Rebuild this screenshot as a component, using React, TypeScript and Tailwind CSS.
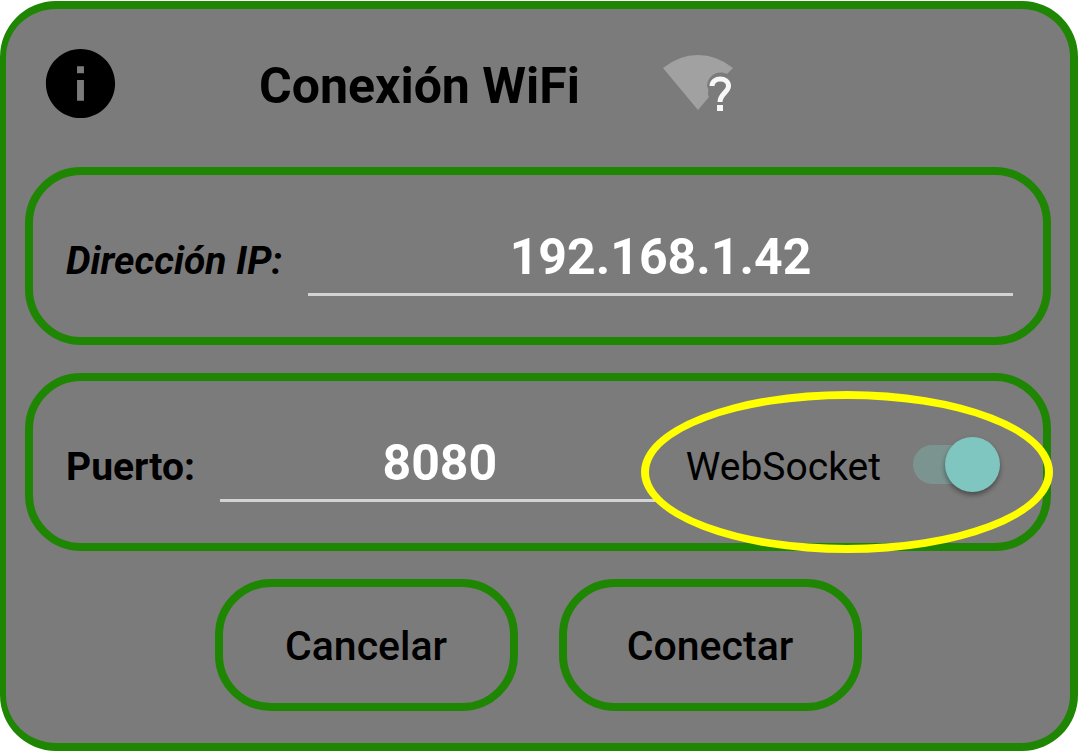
import { useState } from "react";
import { MdInfo } from "react-icons/md";

function WifiUnknownIcon() {
  return (
    <svg width="72" height="60" viewBox="0 0 72 60" fill="none" aria-hidden="true">
      <path
        d="M35 55 L0 13 Q16 0 35 0 Q54 0 70 13 L64 19 C56 15 45 19 44 31 C46 34 45 37 45 40 L46 42 Z"
        fill="#a1a1a1"
      />
      <path d="M49 31 C49 21.5 65.5 22 65.5 31 C65.5 37 57 39 57 47" stroke="#f7f7f7" strokeWidth="5" />
      <rect x="54" y="50" width="6" height="6" fill="#f7f7f7" />
    </svg>
  );
}

const panel =
  "relative flex items-baseline rounded-[56px] border-8 border-[#1f8604] py-[41px] pl-[33px] pr-[30px]";
const field =
  "h-20 min-w-0 flex-1 border-b-3 border-[#d3d3d3] bg-transparent pt-1 text-center text-[50px] font-bold text-white outline-none";
const action =
  "h-[132px] w-[303px] rounded-[56px] border-8 border-[#1f8604] pt-1 text-[41px] font-medium";

export default function App() {
  const [ip, setIp] = useState("192.168.1.42");
  const [port, setPort] = useState("8080");
  const [webSocket, setWebSocket] = useState(true);

  return (
    <main className="bg-white pt-px font-['Roboto',sans-serif] text-black">
      <form
        className="rounded-[56px] border-8 border-l-6 border-[#1f8604] bg-[#7b7b7b] pb-8 pl-[19px] pr-[19px]"
        onSubmit={(e) => e.preventDefault()}
      >
        <header className="flex h-[158px] items-start pl-[14px] pt-[33px]">
          <button type="button" aria-label="Información">
            <MdInfo size={83} />
          </button>
          <h1 className="ml-[137px] mt-3 text-[50px] leading-[64px] font-bold">Conexión WiFi</h1>
          <div className="ml-[83px] mt-[13px]">
            <WifiUnknownIcon />
          </div>
        </header>

        <div className="flex flex-col gap-7">
          <section className={panel}>
            <label htmlFor="ip" className="w-[242px] shrink-0 text-[39px] leading-[48px] font-bold italic">
              Dirección IP:
            </label>
            <input id="ip" className={field} value={ip} onChange={(e) => setIp(e.target.value)} />
          </section>

          <section className={panel}>
            <label htmlFor="port" className="w-[154px] shrink-0 text-[39px] leading-[48px] font-bold">
              Puerto:
            </label>
            <input id="port" className={field} value={port} onChange={(e) => setPort(e.target.value)} />
            <label className="flex shrink-0 items-center gap-8 pl-[26px] pr-[13px] text-[39px] leading-[48px]">
              WebSocket
              <input
                type="checkbox"
                role="switch"
                className="peer sr-only"
                checked={webSocket}
                onChange={(e) => setWebSocket(e.target.checked)}
              />
              <span className="mb-1 flex h-[39px] w-[87px] items-center justify-start rounded-full bg-[linear-gradient(#7b9490,#7b9490)] bg-size-[70px_39px] bg-no-repeat peer-checked:justify-end">
                <span className="size-[55px] shrink-0 rounded-full bg-[#80c6c0] shadow-[0_3px_5px_rgba(0,0,0,0.4)]" />
              </span>
            </label>
            <span className="pointer-events-none absolute -right-[10px] top-[10px] h-[162px] w-[412px] rounded-[50%] border-8 border-[#ffff00]" />
          </section>

          <div className="flex justify-center gap-[41px]">
            <button type="button" className={action}>Cancelar</button>
            <button type="submit" className={action}>Conectar</button>
          </div>
        </div>
      </form>
    </main>
  );
}
